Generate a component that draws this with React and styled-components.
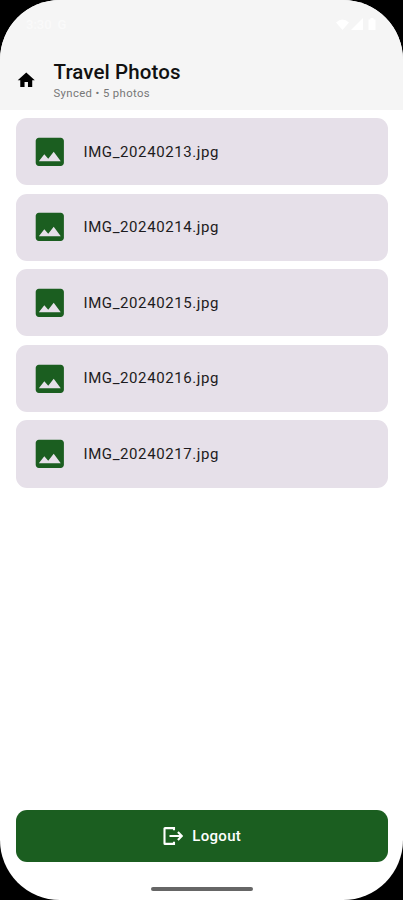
import styled, { createGlobalStyle } from "styled-components";

const GlobalStyle = createGlobalStyle`
    * {
        box-sizing: border-box;
    }
    html, body {
        margin: 0;
        padding: 0;
        background: #000;
        font-family: Roboto, "Liberation Sans", sans-serif;
    }
`;

const Screen = styled.div`
    display: flex;
    flex-direction: column;
    width: 403px;
    height: 900px;
    overflow: hidden;
    border-radius: 60px;
    background: #fff;
`;

const Header = styled.header`
    flex: none;
    height: 110px;
    background: #f5f5f5;
`;

const StatusBar = styled.div`
    display: flex;
    align-items: center;
    justify-content: space-between;
    height: 48px;
    padding: 0 26px 0 26px;
    color: #fafafa;
    font-size: 13px;
    font-weight: 500;
`;

const StatusGroup = styled.div`
    display: flex;
    align-items: center;
    gap: ${({ $gap }) => $gap}px;
`;

const TitleBar = styled.div`
    display: flex;
    align-items: center;
    height: 62px;
    padding: 1.5px 16px 0;
`;

const Titles = styled.div`
    margin-left: 17px;
    padding-top: 2px;
`;

const Title = styled.h1`
    margin: 0;
    color: #111;
    font-size: 20.5px;
    font-weight: 500;
    line-height: 25px;
    letter-spacing: 0.1px;
`;

const Subtitle = styled.p`
    margin: 0;
    color: #777;
    font-size: 11.3px;
    line-height: 17px;
    letter-spacing: 0.38px;
`;

const PhotoList = styled.ul`
    display: flex;
    flex: 1;
    flex-direction: column;
    gap: 8.3px;
    margin: 0;
    padding: 8px 15.5px;
    list-style: none;
`;

const PhotoCard = styled.li`
    display: flex;
    align-items: center;
    gap: 15.4px;
    height: 67.3px;
    padding: 0 15px;
    border-radius: 11px;
    background: #e6e0e9;
    color: #1d1b20;
    font-size: 15px;
    letter-spacing: 0.6px;
`;

const LogoutButton = styled.button`
    display: flex;
    flex: none;
    align-items: center;
    justify-content: center;
    gap: 9px;
    height: 52px;
    margin: 0 15.5px;
    padding: 0 0 0 1.5px;
    border: 0;
    border-radius: 11px;
    background: #1b5e20;
    color: #fff;
    font-family: inherit;
    font-size: 15px;
    font-weight: 500;
    letter-spacing: 0.3px;
`;

const NavArea = styled.div`
    display: flex;
    flex: none;
    justify-content: center;
    height: 38px;
    padding-top: 25px;
`;

const NavHandle = styled.div`
    width: 102px;
    height: 4px;
    border-radius: 2px;
    background: #666;
`;

const Icon = styled.svg`
    display: block;
    flex: none;
    width: ${({ $size }) => $size}px;
    height: ${({ $size }) => $size}px;
    fill: ${({ $color }) => $color || "currentColor"};
`;

const HomeIcon = () => (
    <Icon $size={20.5} $color="#000" viewBox="0 0 24 24">
        <path d="M10 20v-6h4v6h5v-8h3L12 3 2 12h3v8z" />
    </Icon>
);

const ImageIcon = () => (
    <Icon $size={37.6} $color="#1b5e20" viewBox="0 0 24 24">
        <path d="M21 19V5c0-1.1-.9-2-2-2H5c-1.1 0-2 .9-2 2v14c0 1.1.9 2 2 2h14c1.1 0 2-.9 2-2zM8.5 13.5l2.5 3.01L14.5 12l4.5 6H5l3.5-4.5z" />
    </Icon>
);

const LogoutIcon = () => (
    <Icon $size={20} viewBox="0 0 20 20">
        <path
            d="M11 4.2V2.1H2Q1.5 2.1 1.5 2.6V17.4Q1.5 17.9 2 17.9H11V15.8M6.5 10H18.6M14.9 6.1L18.8 10l-3.9 3.9"
            fill="none"
            stroke="currentColor"
            strokeWidth="2.1"
        />
    </Icon>
);

const photos = [
    "IMG_20240213.jpg",
    "IMG_20240214.jpg",
    "IMG_20240215.jpg",
    "IMG_20240216.jpg",
    "IMG_20240217.jpg",
];

export default function App() {
    return (
        <>
            <GlobalStyle />
            <Screen>
                <Header>
                    <StatusBar>
                        <StatusGroup $gap={6}>
                            <span>3:30</span>
                            <span>G</span>
                        </StatusGroup>
                        <StatusGroup $gap={2}>
                            <Icon $size={13} $color="#fff" viewBox="0 0 13 13">
                                <path d="M0 4.5Q6.5-1.5 13 4.5L6.5 12z" />
                            </Icon>
                            <Icon $size={12} $color="#fff" viewBox="0 0 12 12">
                                <path d="M12 0v12H0z" />
                            </Icon>
                            <Icon $size={12} $color="#fff" viewBox="0 0 12 12">
                                <path d="M3.5 1.5H5.5V0h3v1.5h2V12h-7z" />
                            </Icon>
                        </StatusGroup>
                    </StatusBar>
                    <TitleBar>
                        <HomeIcon />
                        <Titles>
                            <Title>Travel Photos</Title>
                            <Subtitle>Synced • 5 photos</Subtitle>
                        </Titles>
                    </TitleBar>
                </Header>
                <PhotoList>
                    {photos.map((name) => (
                        <PhotoCard key={name}>
                            <ImageIcon />
                            <span>{name}</span>
                        </PhotoCard>
                    ))}
                </PhotoList>
                <LogoutButton>
                    <LogoutIcon />
                    Logout
                </LogoutButton>
                <NavArea>
                    <NavHandle />
                </NavArea>
            </Screen>
        </>
    );
}
